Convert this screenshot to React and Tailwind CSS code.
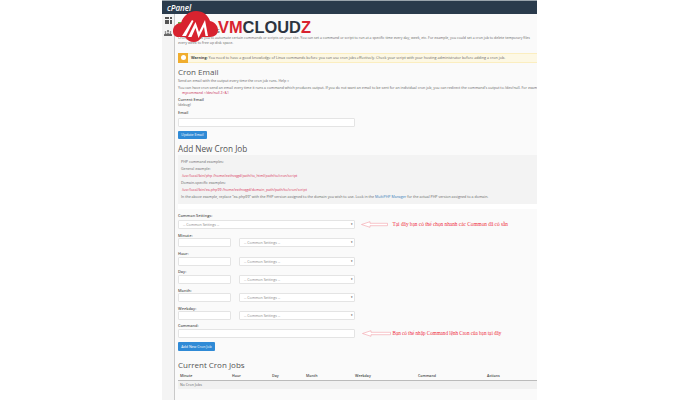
const sans = "font-['Open_Sans','Noto_Sans',sans-serif]"
const labelCls = 'text-[3.9px] leading-[5px] font-semibold text-[#555]'

function Input({ className }) {
  return <div className={`h-[9px] bg-white border border-[#e4e4e4] rounded-[1px] ${className}`} />
}

function Select({ className }) {
  return (
    <div className={`h-[9px] bg-white border border-[#e4e4e4] rounded-[1px] flex items-center justify-between pl-[4px] pr-[1px] text-[3.6px] text-[#888] ${className}`}>
      <span>-- Common Settings --</span>
      <span className="text-[3px] text-[#333]">▾</span>
    </div>
  )
}

function TimeRow({ label }) {
  return (
    <div className="mt-[3.75px]">
      <div className={labelCls}>{label}</div>
      <div className="flex gap-[8px] mt-[0.5px]">
        <Input className="w-[53px]" />
        <Select className="w-[115.5px]" />
      </div>
    </div>
  )
}

function Arrow({ w }) {
  return (
    <svg width={w} height="7" viewBox={`0 0 ${w} 7`} className="flex-none">
      <path d={`M0.5 3.5 L9 0.7 V2.3 H${w - 0.5} V4.7 H9 V6.3 Z`} fill="#fff" stroke="#f4a0a8" strokeWidth="0.6" />
    </svg>
  )
}

function Logo() {
  return (
    <div className="absolute left-[172px] top-[10px] flex items-center">
      <svg width="47" height="33" viewBox="0 0 47 33" className="flex-none">
        <path d="M1 21 C1 16 5 13 9 13 C11 6 17 1 24 1 C31 1 36 5 38 11 C43 12 46 16 46 20 C46 24 43 27 38 27 L30 27 C28 30 25 32 22 32 C18 32 15 30 13 27 L7 27 C3 27 1 25 1 21 Z" fill="#d8232f" />
        <path d="M10 26 L20 10 L21.5 11 L14 26 Z" fill="#fff" />
        <path d="M16 27 L23.5 12 L27 22 L33 10 L36 26 L33.5 26 L32 17 L26.5 28 L23.5 18 L19.5 27 Z" fill="#fff" />
      </svg>
      <div className="font-['Liberation_Sans',sans-serif] font-bold text-[16.4px] leading-none -ml-[1px] mt-[1px]">
        <span className="text-[#d8232f]">VM</span>
        <span className="text-[#2c3440]">CLOUD</span>
        <span className="text-[#d8232f]">Z</span>
      </div>
    </div>
  )
}

export default function App() {
  return (
    <div className={`w-[700px] h-[400px] bg-white flex overflow-hidden relative ${sans}`}>
      <div className="w-[375px] ml-[162px] h-[400px] flex flex-col flex-none bg-[#fafafa]">
        <div className="h-[14px] bg-[#2a3b4c] border-t border-[#9aa5ad] flex items-center pl-[5px] flex-none">
          <span className="text-white italic font-semibold text-[8px] leading-none">cPanel</span>
        </div>
        <div className="flex flex-1 min-h-0">
          <div className="w-[13px] bg-[#f4f4f4] border-r border-[#c9c9c9] flex-none flex flex-col items-center pt-[3px] gap-[6px]">
            <div className="grid grid-cols-3 gap-[0.5px]">
              {[1, 2, 3, 4, 5, 6, 7, 8, 9].map((i) => (
                <div key={i} className="w-[2px] h-[2px] bg-[#555]" />
              ))}
            </div>
            <svg width="8" height="6" viewBox="0 0 8 6">
              <path d="M0 6 V4.5 L1.5 3 L3 4 L4 2 L5 4 L6.5 3 L8 4.5 V6 Z" fill="#666" />
              <circle cx="4" cy="1" r="1" fill="#666" />
              <circle cx="1.5" cy="2" r="0.8" fill="#666" />
              <circle cx="6.5" cy="2" r="0.8" fill="#666" />
            </svg>
          </div>
          <div className="flex-1 min-w-0 pl-[3px] overflow-hidden text-[#666] text-[3.6px] leading-[5px]">
            <div className="h-[21px] flex items-end gap-[1px]">
              <div className="w-[5px] h-[5px] bg-[#6cb33f] mb-[8px] flex-none" />
              <span className="text-[8px] leading-[10px] text-[#666]">Cron Jobs</span>
            </div>
            <p className="whitespace-nowrap text-[3.5px]">Cron jobs allow you to automate certain commands or scripts on your site. You can set a command or script to run at a specific time every day, week, etc. For example, you could set a cron job to delete temporary files</p>
            <p className="whitespace-nowrap">every week to free up disk space.</p>
            <div className="mt-[7.5px] h-[10px] bg-[#fdf8e4] border-y border-[#fbeec0] flex items-center">
              <div className="w-[10px] h-[10px] bg-[#f0ad2e] flex items-center justify-center flex-none">
                <div className="w-[5px] h-[5px] rounded-full bg-white" />
              </div>
              <span className="ml-[3px] whitespace-nowrap text-[3.7px]"><b className="font-bold text-[#444]">Warning:</b> You need to have a good knowledge of Linux commands before you can use cron jobs effectively. Check your script with your hosting administrator before adding a cron job.</span>
            </div>
            <h2 className="mt-[4px] text-[8px] leading-[10px] text-[#555]">Cron Email</h2>
            <p className="mt-[1.5px] whitespace-nowrap">Send an email with the output every time the cron job runs. Help »</p>
            <p className="mt-[1.5px] whitespace-nowrap">You can have cron send an email every time it runs a command which produces output. If you do not want an email to be sent for an individual cron job, you can redirect the command's output to /dev/null. For example:</p>
            <p className="mt-[0.5px] whitespace-nowrap pl-[4px] text-[#c7254e] text-[3.4px]">mycommand &gt;/dev/null 2&gt;&amp;1</p>
            <div className={`mt-[2px] ${labelCls}`}>Current Email</div>
            <div>(debug)</div>
            <div className={`mt-[3px] ${labelCls}`}>Email</div>
            <Input className="w-[177px] mt-[2.5px] h-[8.5px]" />
            <div className="mt-[4px] w-[29px] h-[8px] bg-[#2f8ad6] rounded-[1px] text-white text-[3.6px] leading-[8px] text-center">Update Email</div>
            <h2 className="mt-[5px] text-[8.2px] leading-[10px] text-[#555]">Add New Cron Job</h2>
            <div className="mt-[1px] h-[49px] bg-[#f3f3f3] pl-[3px] pt-[3.5px] overflow-hidden text-[3.6px] leading-[7px]">
              <div>PHP command examples:</div>
              <div>General example:</div>
              <div className="text-[#d9355a] pl-[1px]">/usr/local/bin/php /home/exthvqgd/path/to_html/path/to/cron/script</div>
              <div>Domain-specific examples:</div>
              <div className="text-[#d9355a] pl-[1px]">/usr/local/bin/ea-php99 /home/exthvqgd/domain_path/path/to/cron/script</div>
              <div className="whitespace-nowrap leading-[5px] mt-[0.5px]">In the above example, replace "ea-php99" with the PHP version assigned to the domain you wish to use. Look in the <span className="text-[#337ab7]">MultiPHP Manager</span> for the actual PHP version assigned to a domain.</div>
            </div>
            <div className="h-[5px] bg-white" />
            <div className={`mt-[4.5px] ${labelCls}`}>Common Settings:</div>
            <div className="flex items-center mt-[2px]">
              <Select className="w-[176.5px] flex-none" />
              <div className="ml-[6px] flex items-center gap-[5px]">
                <Arrow w={27} />
                <span className="whitespace-nowrap font-['Liberation_Serif',serif] text-[5.3px] text-[#ef2b3c]">Tại đây bạn có thể chọn nhanh các Common đã có sẵn</span>
              </div>
            </div>
            <TimeRow label="Minute:" />
            <TimeRow label="Hour:" />
            <TimeRow label="Day:" />
            <TimeRow label="Month:" />
            <TimeRow label="Weekday:" />
            <div className={`mt-[3px] ${labelCls}`}>Command:</div>
            <div className="flex items-center mt-[1px]">
              <Input className="w-[176.5px] flex-none" />
              <div className="ml-[7px] flex items-center gap-[2px]">
                <Arrow w={29} />
                <span className="whitespace-nowrap font-['Liberation_Serif',serif] text-[5.1px] text-[#ef2b3c]">Bạn có thể nhập Command lệnh Cron của bạn tại đây</span>
              </div>
            </div>
            <div className="mt-[3.5px] w-[37px] h-[9px] bg-[#2f8ad6] rounded-[1px] text-white text-[3.6px] leading-[9px] text-center">Add New Cron Job</div>
            <h2 className="mt-[9.5px] text-[8px] leading-[10px] text-[#555]">Current Cron Jobs</h2>
            <div className="flex h-[10.5px] items-center border-b border-[#bbb] font-semibold text-[#444] text-[3.6px]">
              <div className="w-[54px] pl-[2px]">Minute</div>
              <div className="w-[40px]">Hour</div>
              <div className="w-[34px]">Day</div>
              <div className="w-[49px]">Month</div>
              <div className="w-[63px]">Weekday</div>
              <div className="w-[69px]">Command</div>
              <div>Actions</div>
            </div>
            <div className="h-[8px] bg-[#f1f1f1] pl-[2px] text-[3.6px] leading-[8px]">No Cron Jobs</div>
          </div>
        </div>
      </div>
      <Logo />
    </div>
  )
}
